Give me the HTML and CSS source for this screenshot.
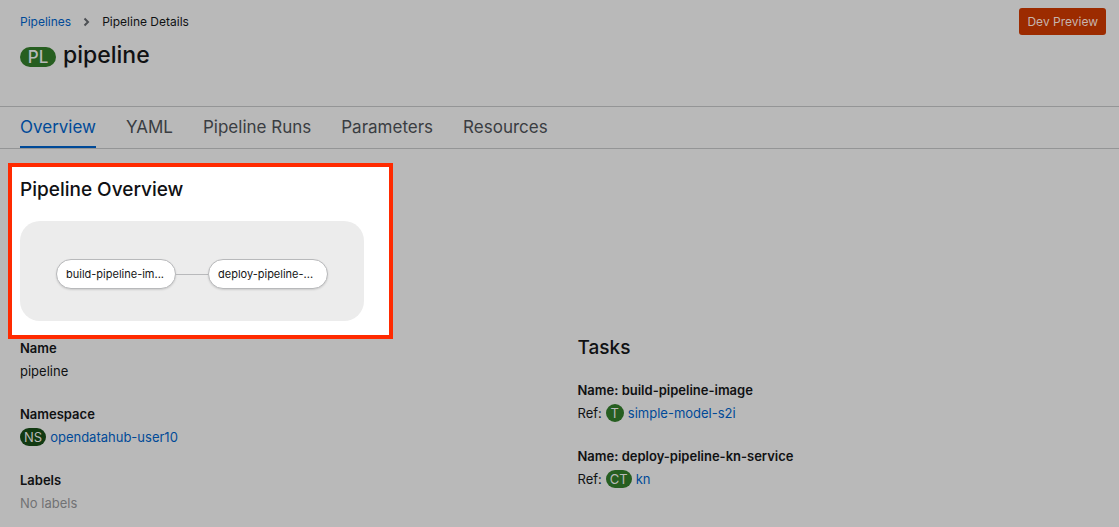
FILE: index.html
```html
<!DOCTYPE html>
<html lang="en">
<head>
<meta charset="utf-8">
<meta name="viewport" content="width=device-width, initial-scale=1">
<title>Pipeline Details</title>
<link rel="stylesheet" href="styles.css">
</head>
<body>
<header class="page-header">
  <div class="heading">
    <nav class="breadcrumb" aria-label="Breadcrumb">
      <a class="link" href="#pipelines">Pipelines</a>
      <svg class="chevron" viewBox="0 0 7 10" aria-hidden="true"><path d="M1.5 1.5 5 5 1.5 8.5"/></svg>
      <span>Pipeline Details</span>
    </nav>
    <h1 class="title"><span class="badge badge-large">PL</span><span>pipeline</span></h1>
  </div>
  <button class="preview" type="button">Dev Preview</button>
</header>
<nav class="tabs" aria-label="Pipeline sections">
  <a class="tab tab-active" href="#overview" aria-current="page">Overview</a>
  <a class="tab" href="#yaml">YAML</a>
  <a class="tab" href="#runs">Pipeline Runs</a>
  <a class="tab" href="#parameters">Parameters</a>
  <a class="tab" href="#resources">Resources</a>
</nav>
<main>
  <section class="highlight">
    <h2 class="section-title">Pipeline Overview</h2>
    <div class="graph">
      <button class="node" type="button">build-pipeline-im...</button>
      <span class="edge"></span>
      <button class="node" type="button">deploy-pipeline-...</button>
    </div>
  </section>
  <div class="details">
    <dl class="list">
      <div class="item"><dt>Name</dt><dd>pipeline</dd></div>
      <div class="item"><dt>Namespace</dt><dd><span class="badge badge-dark">NS</span><a class="link" href="#namespace">opendatahub-user10</a></dd></div>
      <div class="item"><dt>Labels</dt><dd class="muted">No labels</dd></div>
    </dl>
    <section class="tasks">
      <h2 class="section-title">Tasks</h2>
      <dl class="list">
        <div class="item"><dt>Name: build-pipeline-image</dt><dd>Ref: <span class="badge">T</span><a class="link" href="#simple-model-s2i">simple-model-s2i</a></dd></div>
        <div class="item"><dt>Name: deploy-pipeline-kn-service</dt><dd>Ref: <span class="badge">CT</span><a class="link" href="#kn">kn</a></dd></div>
      </dl>
    </section>
  </div>
</main>
</body>
</html>
```
FILE: styles.css
```css
* { box-sizing: border-box; }
body {
  margin: 0;
  background: #b9b9b9;
  color: #101113;
  font-family: Inter, "Noto Sans", sans-serif;
  font-size: 13px;
  line-height: 28px;
}
h1, h2, dl, dd { margin: 0; }
button { font-family: inherit; }
.link { color: #004a98; text-decoration: none; }
.page-header {
  display: flex;
  justify-content: space-between;
  align-items: flex-start;
  min-height: 107px;
  padding: 8px 13px 0 20px;
  border-bottom: 1px solid #949596;
}
.breadcrumb {
  display: flex;
  align-items: center;
  gap: 12px;
  font-size: 12px;
  line-height: 27px;
}
.chevron {
  width: 7px;
  height: 10px;
  fill: none;
  stroke: #4d5054;
  stroke-width: 2;
}
.title {
  display: flex;
  align-items: baseline;
  gap: 7px;
  font-size: 23px;
  font-weight: 500;
  line-height: 40px;
}
.badge {
  flex: none;
  min-width: 18px;
  padding: 0 4px;
  border-radius: 10px;
  background: #265e20;
  color: #b9b9b9;
  font-size: 13px;
  font-weight: 400;
  line-height: 18px;
  text-align: center;
}
.badge-dark { background: #123a12; }
.badge-large {
  min-width: 36px;
  font-size: 17px;
  font-weight: 500;
  line-height: 20px;
}
.preview {
  padding: 0 8px;
  border: 0;
  border-radius: 3px;
  background: #9c2b00;
  color: #c6b4ae;
  font-size: 12px;
  line-height: 27px;
}
.tabs {
  display: flex;
  gap: 30px;
  padding: 0 20px;
  border-bottom: 1px solid #949596;
}
.tab {
  padding-top: 2px;
  border-bottom: 2px solid transparent;
  color: #3a3d42;
  font-size: 17px;
  line-height: 37px;
  text-decoration: none;
}
.tab-active { border-color: #004a98; color: #004a98; }
.highlight {
  width: fit-content;
  margin: 14px 8px 0;
  padding: 8px 25px 14px 8px;
  border: 4px solid #ff2a00;
  background: #fff;
}
.section-title {
  font-size: 19px;
  font-weight: 500;
  line-height: 30px;
}
.graph {
  display: flex;
  align-items: center;
  margin-top: 16px;
  padding: 38px 36px 32px;
  border-radius: 20px;
  background: #ececec;
}
.node {
  width: 120px;
  padding: 0 9px;
  border: 1px solid #b8b9bb;
  border-radius: 15px;
  background: #fff;
  box-shadow: 0 1px 2px #0002;
  color: #151515;
  font-size: 11px;
  line-height: 28px;
  text-align: left;
}
.edge { width: 32px; height: 1px; background: #b8b9bb; }
.details {
  display: grid;
  grid-template-columns: 1fr 1fr;
  gap: 36px;
  padding: 0 20px;
}
.list { display: grid; gap: 20px; }
dt { font-weight: 600; line-height: 18px; }
dd { display: flex; align-items: center; gap: 4px; }
.muted { color: #717274; }
.tasks .section-title { line-height: 18px; }
.tasks .list { margin-top: 24px; }
```
